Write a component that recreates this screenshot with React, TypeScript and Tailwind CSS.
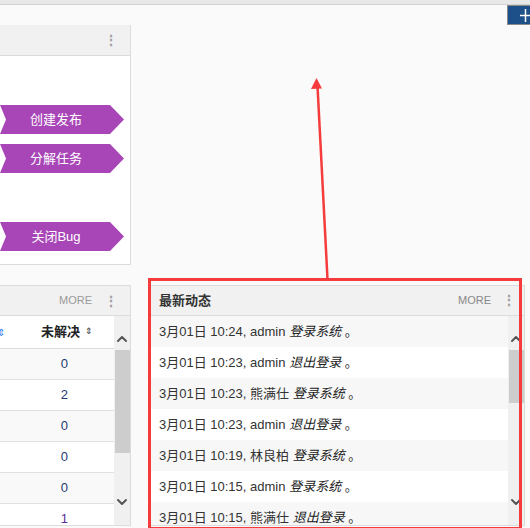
import { ChevronUp, ChevronDown } from 'lucide-react'

const chevrons = [
  { label: '创建发布', mt: 'mt-[49px]' },
  { label: '分解任务', mt: 'mt-[10px]' },
  { label: '关闭Bug', mt: 'mt-[49px]' }
]

const counts = [
  { n: '0', color: 'text-[#1e3a70]' },
  { n: '2', color: 'text-[#1e3a70]' },
  { n: '0', color: 'text-[#1e3a70]' },
  { n: '0', color: 'text-[#1e3a70]' },
  { n: '0', color: 'text-[#1e3a70]' },
  { n: '1', color: 'text-[#5b2d9a]' }
]

const actions = [
  { time: '3月01日 10:24', user: 'admin', what: '登录系统' },
  { time: '3月01日 10:23', user: 'admin', what: '退出登录' },
  { time: '3月01日 10:23', user: '熊满仕', what: '登录系统' },
  { time: '3月01日 10:23', user: 'admin', what: '退出登录' },
  { time: '3月01日 10:19', user: '林良柏', what: '登录系统' },
  { time: '3月01日 10:15', user: 'admin', what: '登录系统' },
  { time: '3月01日 10:15', user: '熊满仕', what: '退出登录' }
]

function Dots() {
  return <span className="text-[14px] font-bold leading-none text-[#a0a0a0]">⋮</span>
}

function Scrollbar({ thumb }: { thumb: string }) {
  return (
    <div className="flex w-[16px] shrink-0 flex-col items-center bg-[#f0f0f0]">
      <ChevronUp className="mt-[15px] h-[16px] w-[16px] text-[#555]" strokeWidth={3} />
      <div className={`mt-[3px] w-[15px] bg-[#cdcdcd] ${thumb}`} />
      <div className="flex-1" />
      <ChevronDown className="mb-[15px] h-[16px] w-[16px] text-[#555]" strokeWidth={3} />
    </div>
  )
}

export default function App() {
  return (
    <div
      className="relative h-[528px] w-[530px] overflow-hidden bg-[#fafafa] text-[13px] text-[#333]"
      style={{ fontFamily: '"Liberation Sans", "Noto Sans CJK SC", sans-serif' }}
    >
      <div className="h-[5px] border-b border-[#d2d2d2] bg-[#e8e8e8]" />
      <div className="flex h-[20px] justify-end">
        <div className="h-[20px] w-[23px] border border-[#8a8a8a] border-r-0 bg-[#1d4f88]">
          <svg width="22" height="18" viewBox="0 0 22 18">
            <line x1="12" y1="9.5" x2="22" y2="9.5" stroke="white" strokeWidth="1.5" />
            <line x1="17.5" y1="3" x2="17.5" y2="16" stroke="white" strokeWidth="1.5" />
          </svg>
        </div>
      </div>

      <div className="flex gap-[19px]">
        <div className="flex w-[131px] flex-col gap-[20px]">
          {/* flow panel */}
          <div className="h-[240px] border-r border-b border-[#dcdcdc] bg-white">
            <div className="flex h-[31px] items-center justify-end border-b border-[#dcdcdc] bg-[#f1f1f1] pr-[12px]">
              <Dots />
            </div>
            {chevrons.map(c => (
              <div
                key={c.label}
                className={`${c.mt} flex h-[29px] w-[124px] items-center justify-center bg-[#a846b7] pr-[12px] text-white [clip-path:polygon(0_0,calc(100%_-_14px)_0,100%_50%,calc(100%_-_14px)_100%,0_100%,6px_50%)]`}
              >
                {c.label}
              </div>
            ))}
          </div>

          {/* bug table panel */}
          <div className="h-[241px] border-t border-r border-b border-[#dcdcdc] bg-white">
            <div className="flex h-[30px] items-center justify-end gap-[12px] border-b border-[#dcdcdc] bg-[#f1f1f1] pr-[12px]">
              <span className="text-[11px] text-[#9a9a9a]">MORE</span>
              <Dots />
            </div>
            <div className="flex h-[209px]">
              <div className="flex-1 overflow-hidden">
                <div className="flex h-[33px] items-center border-b border-[#dcdcdc] bg-white">
                  <span className="-ml-[3px] text-[10px] text-[#3b82f6]">⇕</span>
                  <span className="ml-[36px] font-bold text-[#222]">未解决</span>
                  <span className="ml-[5px] text-[9px] text-[#333]">⇕</span>
                </div>
                {counts.map((c, i) => (
                  <div
                    key={i}
                    className={`flex h-[31px] items-center justify-end border-b border-[#e0e0e0] pr-[46px] ${i % 2 === 0 ? 'bg-[#f9f9f9]' : 'bg-white'} ${c.color}`}
                  >
                    {c.n}
                  </div>
                ))}
              </div>
              <Scrollbar thumb="h-[103px]" />
            </div>
          </div>
        </div>

        <div className="pt-[260px]">
          <div className="h-[241px] w-[375px] border border-[#dcdcdc] bg-white">
            <div className="flex h-[30px] items-center border-b border-[#dcdcdc] bg-[#f1f1f1] pl-[8px] pr-[8px]">
              <span className="font-bold text-[#333]">最新动态</span>
              <span className="ml-auto text-[11px] text-[#888]">MORE</span>
              <span className="ml-[11px]">
                <Dots />
              </span>
            </div>
            <div className="flex h-[209px]">
              <div className="flex-1 overflow-hidden">
                {actions.map((a, i) => (
                  <div
                    key={i}
                    className={`flex h-[31px] items-center whitespace-nowrap pl-[8px] ${i % 2 === 0 ? 'bg-[#f7f7f7]' : 'bg-white'}`}
                  >
                    <span>
                      {a.time}, {a.user} <i className="text-[#222]">{a.what}</i> 。
                    </span>
                  </div>
                ))}
              </div>
              <Scrollbar thumb="h-[53px]" />
            </div>
          </div>
        </div>
      </div>

      {/* annotation */}
      <div className="pointer-events-none absolute left-[148px] top-[278px] h-[252px] w-[374px] border-[3px] border-[#f53b3b]" />
      <svg className="pointer-events-none absolute left-0 top-0" width="530" height="528">
        <line x1="327.5" y1="279" x2="317.5" y2="86" stroke="#f53b3b" strokeWidth="2.5" />
        <polygon points="316.5,78 311,89 322,88.5" fill="#f53b3b" />
      </svg>
    </div>
  )
}
